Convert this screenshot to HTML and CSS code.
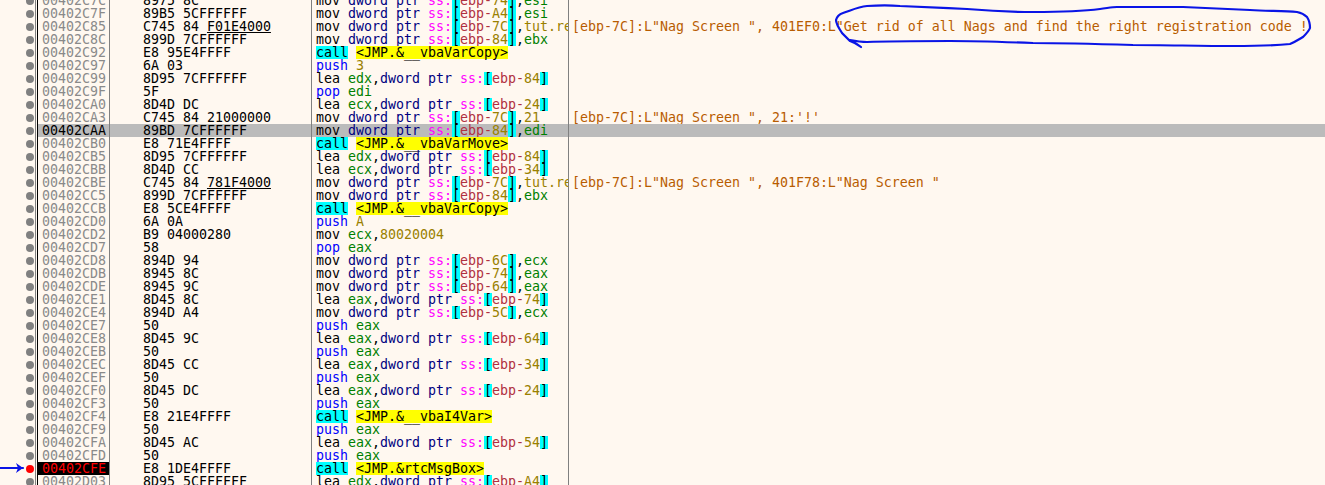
FILE: index.html
```html
<!DOCTYPE html>
<html lang="en">
<head>
<meta charset="utf-8">
<title>Disassembly</title>
<link rel="stylesheet" href="styles.css">
</head>
<body>
<main class="view">
<div class="row"><i class="dot"></i><span class="addr">00402C7C</span><span class="bytes">8975 8C</span><span class="asm">mov <b class="k">dword ptr</b> <b class="s">ss:</b><b class="o">[</b><b class="r">ebp-</b><b class="n">74</b><b class="o">]</b>,<b class="g">esi</b></span><span class="note"></span></div>
<div class="row"><i class="dot"></i><span class="addr">00402C7F</span><span class="bytes">89B5 5CFFFFFF</span><span class="asm">mov <b class="k">dword ptr</b> <b class="s">ss:</b><b class="o">[</b><b class="r">ebp-</b><b class="n">A4</b><b class="o">]</b>,<b class="g">esi</b></span><span class="note"></span></div>
<div class="row"><i class="dot"></i><span class="addr">00402C85</span><span class="bytes">C745 84 <u>F01E4000</u></span><span class="asm">mov <b class="k">dword ptr</b> <b class="s">ss:</b><b class="o">[</b><b class="r">ebp-</b><b class="n">7C</b><b class="o">]</b>,<b class="n">tut.re</b></span><span class="note">[ebp-7C]:L"Nag Screen ", 401EF0:L"Get rid of all Nags and find the right registration code !</span></div>
<div class="row"><i class="dot"></i><span class="addr">00402C8C</span><span class="bytes">899D 7CFFFFFF</span><span class="asm">mov <b class="k">dword ptr</b> <b class="s">ss:</b><b class="o">[</b><b class="r">ebp-</b><b class="n">84</b><b class="o">]</b>,<b class="g">ebx</b></span><span class="note"></span></div>
<div class="row"><i class="dot"></i><span class="addr">00402C92</span><span class="bytes">E8 95E4FFFF</span><span class="asm"><b class="o">call</b> <b class="y">&lt;JMP.&amp;__vbaVarCopy&gt;</b></span><span class="note"></span></div>
<div class="row"><i class="dot"></i><span class="addr">00402C97</span><span class="bytes">6A 03</span><span class="asm"><b class="p">push</b> <b class="n">3</b></span><span class="note"></span></div>
<div class="row"><i class="dot"></i><span class="addr">00402C99</span><span class="bytes">8D95 7CFFFFFF</span><span class="asm">lea <b class="g">edx</b>,<b class="k">dword ptr</b> <b class="s">ss:</b><b class="o">[</b><b class="r">ebp-</b><b class="n">84</b><b class="o">]</b></span><span class="note"></span></div>
<div class="row"><i class="dot"></i><span class="addr">00402C9F</span><span class="bytes">5F</span><span class="asm"><b class="p">pop</b> <b class="g">edi</b></span><span class="note"></span></div>
<div class="row"><i class="dot"></i><span class="addr">00402CA0</span><span class="bytes">8D4D DC</span><span class="asm">lea <b class="g">ecx</b>,<b class="k">dword ptr</b> <b class="s">ss:</b><b class="o">[</b><b class="r">ebp-</b><b class="n">24</b><b class="o">]</b></span><span class="note"></span></div>
<div class="row"><i class="dot"></i><span class="addr">00402CA3</span><span class="bytes">C745 84 21000000</span><span class="asm">mov <b class="k">dword ptr</b> <b class="s">ss:</b><b class="o">[</b><b class="r">ebp-</b><b class="n">7C</b><b class="o">]</b>,<b class="n">21</b></span><span class="note">[ebp-7C]:L"Nag Screen ", 21:'!'</span></div>
<div class="row current"><i class="dot"></i><span class="addr">00402CAA</span><span class="bytes">89BD 7CFFFFFF</span><span class="asm">mov <b class="k">dword ptr</b> <b class="s">ss:</b><b class="o">[</b><b class="r">ebp-</b><b class="n">84</b><b class="o">]</b>,<b class="g">edi</b></span><span class="note"></span></div>
<div class="row"><i class="dot"></i><span class="addr">00402CB0</span><span class="bytes">E8 71E4FFFF</span><span class="asm"><b class="o">call</b> <b class="y">&lt;JMP.&amp;__vbaVarMove&gt;</b></span><span class="note"></span></div>
<div class="row"><i class="dot"></i><span class="addr">00402CB5</span><span class="bytes">8D95 7CFFFFFF</span><span class="asm">lea <b class="g">edx</b>,<b class="k">dword ptr</b> <b class="s">ss:</b><b class="o">[</b><b class="r">ebp-</b><b class="n">84</b><b class="o">]</b></span><span class="note"></span></div>
<div class="row"><i class="dot"></i><span class="addr">00402CBB</span><span class="bytes">8D4D CC</span><span class="asm">lea <b class="g">ecx</b>,<b class="k">dword ptr</b> <b class="s">ss:</b><b class="o">[</b><b class="r">ebp-</b><b class="n">34</b><b class="o">]</b></span><span class="note"></span></div>
<div class="row"><i class="dot"></i><span class="addr">00402CBE</span><span class="bytes">C745 84 <u>781F4000</u></span><span class="asm">mov <b class="k">dword ptr</b> <b class="s">ss:</b><b class="o">[</b><b class="r">ebp-</b><b class="n">7C</b><b class="o">]</b>,<b class="n">tut.re</b></span><span class="note">[ebp-7C]:L"Nag Screen ", 401F78:L"Nag Screen "</span></div>
<div class="row"><i class="dot"></i><span class="addr">00402CC5</span><span class="bytes">899D 7CFFFFFF</span><span class="asm">mov <b class="k">dword ptr</b> <b class="s">ss:</b><b class="o">[</b><b class="r">ebp-</b><b class="n">84</b><b class="o">]</b>,<b class="g">ebx</b></span><span class="note"></span></div>
<div class="row"><i class="dot"></i><span class="addr">00402CCB</span><span class="bytes">E8 5CE4FFFF</span><span class="asm"><b class="o">call</b> <b class="y">&lt;JMP.&amp;__vbaVarCopy&gt;</b></span><span class="note"></span></div>
<div class="row"><i class="dot"></i><span class="addr">00402CD0</span><span class="bytes">6A 0A</span><span class="asm"><b class="p">push</b> <b class="n">A</b></span><span class="note"></span></div>
<div class="row"><i class="dot"></i><span class="addr">00402CD2</span><span class="bytes">B9 04000280</span><span class="asm">mov <b class="g">ecx</b>,<b class="n">80020004</b></span><span class="note"></span></div>
<div class="row"><i class="dot"></i><span class="addr">00402CD7</span><span class="bytes">58</span><span class="asm"><b class="p">pop</b> <b class="g">eax</b></span><span class="note"></span></div>
<div class="row"><i class="dot"></i><span class="addr">00402CD8</span><span class="bytes">894D 94</span><span class="asm">mov <b class="k">dword ptr</b> <b class="s">ss:</b><b class="o">[</b><b class="r">ebp-</b><b class="n">6C</b><b class="o">]</b>,<b class="g">ecx</b></span><span class="note"></span></div>
<div class="row"><i class="dot"></i><span class="addr">00402CDB</span><span class="bytes">8945 8C</span><span class="asm">mov <b class="k">dword ptr</b> <b class="s">ss:</b><b class="o">[</b><b class="r">ebp-</b><b class="n">74</b><b class="o">]</b>,<b class="g">eax</b></span><span class="note"></span></div>
<div class="row"><i class="dot"></i><span class="addr">00402CDE</span><span class="bytes">8945 9C</span><span class="asm">mov <b class="k">dword ptr</b> <b class="s">ss:</b><b class="o">[</b><b class="r">ebp-</b><b class="n">64</b><b class="o">]</b>,<b class="g">eax</b></span><span class="note"></span></div>
<div class="row"><i class="dot"></i><span class="addr">00402CE1</span><span class="bytes">8D45 8C</span><span class="asm">lea <b class="g">eax</b>,<b class="k">dword ptr</b> <b class="s">ss:</b><b class="o">[</b><b class="r">ebp-</b><b class="n">74</b><b class="o">]</b></span><span class="note"></span></div>
<div class="row"><i class="dot"></i><span class="addr">00402CE4</span><span class="bytes">894D A4</span><span class="asm">mov <b class="k">dword ptr</b> <b class="s">ss:</b><b class="o">[</b><b class="r">ebp-</b><b class="n">5C</b><b class="o">]</b>,<b class="g">ecx</b></span><span class="note"></span></div>
<div class="row"><i class="dot"></i><span class="addr">00402CE7</span><span class="bytes">50</span><span class="asm"><b class="p">push</b> <b class="g">eax</b></span><span class="note"></span></div>
<div class="row"><i class="dot"></i><span class="addr">00402CE8</span><span class="bytes">8D45 9C</span><span class="asm">lea <b class="g">eax</b>,<b class="k">dword ptr</b> <b class="s">ss:</b><b class="o">[</b><b class="r">ebp-</b><b class="n">64</b><b class="o">]</b></span><span class="note"></span></div>
<div class="row"><i class="dot"></i><span class="addr">00402CEB</span><span class="bytes">50</span><span class="asm"><b class="p">push</b> <b class="g">eax</b></span><span class="note"></span></div>
<div class="row"><i class="dot"></i><span class="addr">00402CEC</span><span class="bytes">8D45 CC</span><span class="asm">lea <b class="g">eax</b>,<b class="k">dword ptr</b> <b class="s">ss:</b><b class="o">[</b><b class="r">ebp-</b><b class="n">34</b><b class="o">]</b></span><span class="note"></span></div>
<div class="row"><i class="dot"></i><span class="addr">00402CEF</span><span class="bytes">50</span><span class="asm"><b class="p">push</b> <b class="g">eax</b></span><span class="note"></span></div>
<div class="row"><i class="dot"></i><span class="addr">00402CF0</span><span class="bytes">8D45 DC</span><span class="asm">lea <b class="g">eax</b>,<b class="k">dword ptr</b> <b class="s">ss:</b><b class="o">[</b><b class="r">ebp-</b><b class="n">24</b><b class="o">]</b></span><span class="note"></span></div>
<div class="row"><i class="dot"></i><span class="addr">00402CF3</span><span class="bytes">50</span><span class="asm"><b class="p">push</b> <b class="g">eax</b></span><span class="note"></span></div>
<div class="row"><i class="dot"></i><span class="addr">00402CF4</span><span class="bytes">E8 21E4FFFF</span><span class="asm"><b class="o">call</b> <b class="y">&lt;JMP.&amp;__vbaI4Var&gt;</b></span><span class="note"></span></div>
<div class="row"><i class="dot"></i><span class="addr">00402CF9</span><span class="bytes">50</span><span class="asm"><b class="p">push</b> <b class="g">eax</b></span><span class="note"></span></div>
<div class="row"><i class="dot"></i><span class="addr">00402CFA</span><span class="bytes">8D45 AC</span><span class="asm">lea <b class="g">eax</b>,<b class="k">dword ptr</b> <b class="s">ss:</b><b class="o">[</b><b class="r">ebp-</b><b class="n">54</b><b class="o">]</b></span><span class="note"></span></div>
<div class="row"><i class="dot"></i><span class="addr">00402CFD</span><span class="bytes">50</span><span class="asm"><b class="p">push</b> <b class="g">eax</b></span><span class="note"></span></div>
<div class="row breakpoint"><i class="dot"></i><span class="addr">00402CFE</span><span class="bytes">E8 1DE4FFFF</span><span class="asm"><b class="o">call</b> <b class="y">&lt;JMP.&amp;rtcMsgBox&gt;</b></span><span class="note"></span></div>
<div class="row"><i class="dot"></i><span class="addr">00402D03</span><span class="bytes">8D95 5CFFFFFF</span><span class="asm">lea <b class="g">edx</b>,<b class="k">dword ptr</b> <b class="s">ss:</b><b class="o">[</b><b class="r">ebp-</b><b class="n">A4</b><b class="o">]</b></span><span class="note"></span></div>
<svg class="ink" width="1325" height="485" viewBox="0 0 1325 485" aria-hidden="true">
<path class="pen" d="M861 47 C856 43 853 42 850 41 C846 37 843 34 842 33 C838 27 836 23 836 20 C837 16 840 14 843 13 C852 10 858 7 867 6 C880 5 890 5 900 6 C925 7 945 8 967 9 C990 11 1010 12 1033 12 C1060 12 1085 11 1100 9 C1108 8 1112 7 1117 7 C1140 7 1160 7 1183 7 C1210 8 1230 9 1250 10 C1270 11 1285 11 1297 12 C1302 13 1305 15 1307 17 C1309 20 1310 24 1310 28 C1309 31 1306 34 1303 37 C1298 40 1295 42 1290 44 C1270 46 1250 46 1233 46 C1200 46 1165 45 1133 45 C1100 44 1065 43 1033 43 C1005 42 975 41 950 41 C920 41 890 41 867 42 C860 42 855 41 850 40"/>
<path class="pen" d="M0 468 H23"/>
<path class="arrow" d="M16 463 L23 468 L16 473 L18 468 Z"/>
</svg>
</main>
</body>
</html>
```
FILE: styles.css
```css
html, body {
  margin: 0;
  height: 100%;
  overflow: hidden;
  background: #fff8f0;
}

.view {
  position: relative;
  width: 1325px;
  height: 485px;
  overflow: hidden;
  padding-top: 0;
  font-family: "DejaVu Sans Mono", monospace;
  font-size: 13.29px;
  line-height: 13px;
  color: #000;
}

.row {
  display: grid;
  grid-template-columns: 38px 71px 202px 257px 1fr;
  height: 13px;
  white-space: pre;
  position: relative;
  top: -6px;
}

.row > span {
  height: 13px;
}

.dot {
  width: 8px;
  height: 8px;
  margin: 2.5px 0 0 26px;
  border-radius: 50%;
  background: #808080;
}

.addr {
  width: 74px;
  box-sizing: border-box;
  margin-left: -3px;
  padding-left: 6px;
  color: #8a8a8a;
  border-left: 1px solid #808080;
  box-shadow: inset 1px 0 0 #fff8f0, inset 2px 0 0 #000;
}

.bytes {
  padding-left: 33px;
  border-left: 1px solid #808080;
}

.asm {
  padding-left: 4px;
  border-left: 1px solid #808080;
  overflow-x: clip;
  overflow-y: visible;
}

.note {
  padding-left: 3px;
  border-left: 1px solid #808080;
  color: #b85c00;
}

.asm b {
  font-weight: normal;
  display: inline-block;
  height: 13px;
}

.k { color: #000080; }
.s { color: #ff00ff; }
.o { background: #00ffff; }
.r { color: #b03040; }
.n { color: #9a8000; }
.g { color: #008000; }
.p { color: #0000ff; }
.y { background: #ffff00; }

.bytes u {
  text-decoration: underline;
  text-underline-offset: 1px;
}

.current .addr {
  color: #000;
}

.current {
  background: linear-gradient(#bbbbbb, #bbbbbb) 38px 0 no-repeat;
}

.breakpoint .addr {
  background: linear-gradient(#000, #000) 2px 0 no-repeat;
  color: #ff0000;
}

.breakpoint .dot {
  background: #ff0000;
}

.ink {
  position: absolute;
  left: 0;
  top: 0;
  pointer-events: none;
}

.pen {
  fill: none;
  stroke: #0a14e6;
  stroke-width: 2.2;
  stroke-linecap: round;
}

.arrow {
  fill: #0a14e6;
}
```
